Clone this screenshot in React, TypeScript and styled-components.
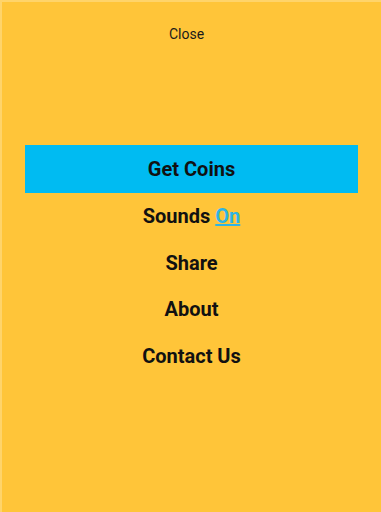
import React from 'react';
import styled, { createGlobalStyle } from 'styled-components';

const GlobalStyle = createGlobalStyle`
    html, body {
        margin: 0;
        padding: 0;
        background: #FFC539;
    }
    * {
        box-sizing: border-box;
    }
`

const Screen = styled.div`
    display: flex;
    flex-direction: column;
    width: 381px;
    height: 512px;
    background-color: #FFC539;
    border-top: 2px solid #FFD46A;
    border-left: 2px solid #FFD46A;
    font-family: Roboto, "Noto Sans", sans-serif;
    color: #111111;
`

const CloseButton = styled.div`
    align-self: center;
    margin-top: 23px;
    margin-right: 10px;
    font-size: 14px;
    line-height: 18px;
    color: #1A1A1A;
`

const Menu = styled.nav`
    display: flex;
    flex-direction: column;
    margin-top: 102px;
    padding: 0 23px 0 23px;
`

const MenuItem = styled.div<{ $active?: boolean }>`
    display: flex;
    align-items: center;
    justify-content: center;
    height: ${p => (p.$active ? '48px' : '46.7px')};
    padding-bottom: ${p => (p.$active ? '0' : '1px')};
    background-color: ${p => (p.$active ? '#00BBF2' : 'transparent')};
    font-size: 20px;
    font-weight: 700;
    color: #111111;
`

const Toggle = styled.span`
    margin-left: 5px;
    color: #2FB4E4;
    text-decoration: underline;
`

export default function App() {
    return (
        <>
            <GlobalStyle />
            <Screen>
                <CloseButton>Close</CloseButton>
                <Menu>
                    <MenuItem $active>Get Coins</MenuItem>
                    <MenuItem>Sounds<Toggle>On</Toggle></MenuItem>
                    <MenuItem>Share</MenuItem>
                    <MenuItem>About</MenuItem>
                    <MenuItem>Contact Us</MenuItem>
                </Menu>
            </Screen>
        </>
    );
}
